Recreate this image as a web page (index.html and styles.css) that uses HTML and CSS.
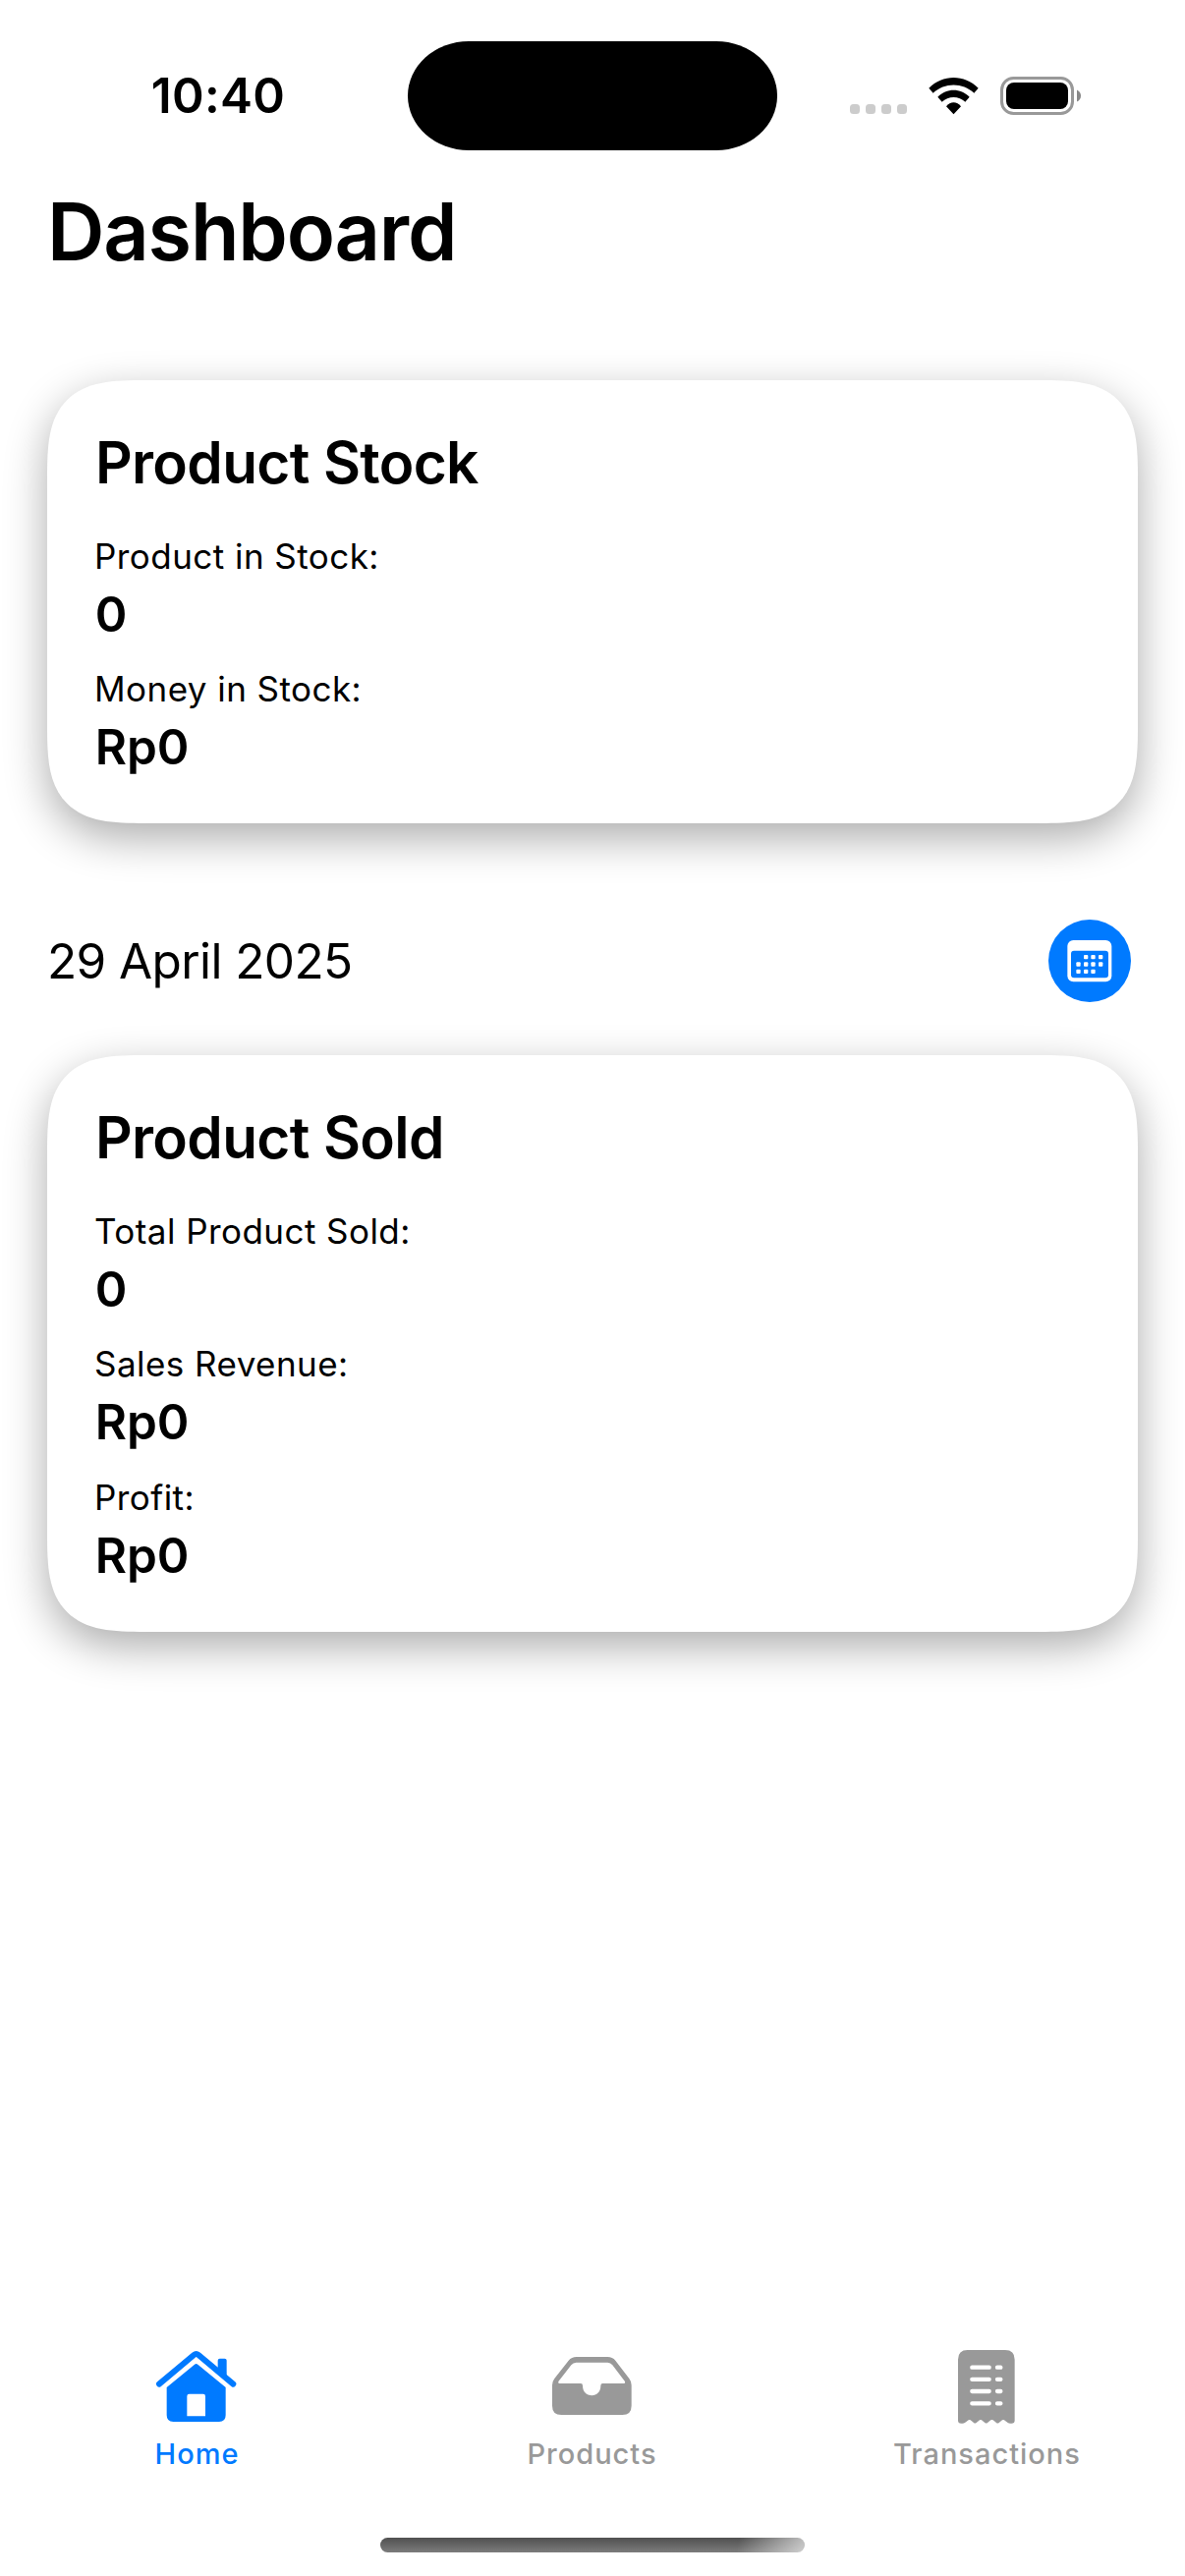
FILE: index.html
```html
<!DOCTYPE html>
<html lang="en">
<head>
<meta charset="utf-8">
<title>Dashboard</title>
<link rel="stylesheet" href="styles.css">
</head>
<body>
<div class="screen">
  <header class="status">
    <div class="status-time">10:40</div>
    <div class="island"></div>
    <div class="status-icons">
      <svg class="signal" viewBox="0 0 58 10"><rect width="10" height="10" rx="3.5"/><rect x="16" width="10" height="10" rx="3.5"/><rect x="32" width="10" height="10" rx="3.5"/><rect x="48" width="10" height="10" rx="3.5"/></svg>
      <svg class="wifi" viewBox="375 114 153 117"><path d="M376 149C418 106 485 106 527 149L514 164C479 131 424 131 389 164Z"/><path d="M403 176C430 148 473 148 500 176L487 191C468 172 435 172 416 191Z"/><path d="M429 205C441 189 462 189 474 205L451.5 229Z"/></svg>
      <svg class="battery" viewBox="0 0 83 39"><rect x="1.5" y="1.5" width="72" height="36" rx="12" fill="none" stroke="#999" stroke-width="3"/><rect x="6" y="6" width="63" height="27" rx="8"/><path d="M78 13.500Q82 15.500 82 19.500T78 25.500Z" fill="#888"/></svg>
    </div>
  </header>

  <main class="content">
    <h1 class="title">Dashboard</h1>

    <section class="card">
      <h2 class="card-title">Product Stock</h2>
      <dl class="stats">
        <div class="stat"><dt>Product in Stock:</dt><dd>0</dd></div>
        <div class="stat"><dt>Money in Stock:</dt><dd>Rp0</dd></div>
      </dl>
    </section>

    <div class="date-row">
      <span class="date">29 April 2025</span>
      <svg class="calendar" viewBox="81 108 252 252">
        <circle cx="207" cy="234" r="126" fill="#007aff"/>
        <rect x="139" y="171" width="135" height="127" rx="18" fill="#fff"/>
        <rect x="150" y="203" width="114" height="83" rx="9" fill="#007aff"/>
        <g fill="#fff">
          <rect x="189" y="216" width="13" height="13" rx="3"/><rect x="211" y="216" width="13" height="13" rx="3"/><rect x="234" y="216" width="13" height="13" rx="3"/>
          <rect x="166" y="238" width="13" height="13" rx="3"/><rect x="189" y="238" width="13" height="13" rx="3"/><rect x="211" y="238" width="13" height="13" rx="3"/><rect x="234" y="238" width="13" height="13" rx="3"/>
          <rect x="166" y="260" width="13" height="13" rx="3"/><rect x="189" y="260" width="13" height="13" rx="3"/><rect x="211" y="260" width="13" height="13" rx="3"/>
        </g>
      </svg>
    </div>

    <section class="card">
      <h2 class="card-title">Product Sold</h2>
      <dl class="stats">
        <div class="stat"><dt>Total Product Sold:</dt><dd>0</dd></div>
        <div class="stat"><dt>Sales Revenue:</dt><dd>Rp0</dd></div>
        <div class="stat"><dt>Profit:</dt><dd>Rp0</dd></div>
      </dl>
    </section>
  </main>

  <nav class="tabs">
    <a class="tab tab-active">
      <svg class="tab-icon" viewBox="78 72 270 252">
        <path d="M96 200L202 111Q209 105 216 111L322 200" fill="none" stroke="currentColor" stroke-width="18" stroke-linecap="round"/>
        <path d="M275 162V128Q275 122 281 122H296Q302 122 302 128V184Z"/>
        <path fill-rule="evenodd" d="M119 210L204 140Q209 136 214 140L299 210V295Q299 315 279 315H139Q119 315 119 295ZM181 298H237V237Q237 230 230 230H188Q181 230 181 237Z"/>
      </svg>
      <span>Home</span>
    </a>
    <a class="tab">
      <svg class="tab-icon" viewBox="144 72 270 252">
        <path fill-rule="evenodd" d="M156 203Q156 192 163 183L206 128Q215 117 230 117H325Q340 117 349 128L391 183Q398 192 398 203V266Q398 294 370 294H184Q156 294 156 266ZM177 198H243Q249 198 249 205C249 224 261 235 277 235C292 235 304 224 304 205Q304 198 310 198H376Q380 197 378 192L340 142Q334 134 325 134H229Q220 134 214 142L175 192Q173 197 177 198Z"/>
      </svg>
      <span>Products</span>
    </a>
    <a class="tab">
      <svg class="tab-icon" viewBox="210 72 270 252">
        <path d="M255 125Q255 96 284 96H399Q428 96 428 125V311Q428 320 418 320Q411 321 406 317L396 310Q393 308 390 310L380 318Q376 321 372 318L362 310Q358 308 355 310L345 318Q341 321 337 318L327 310Q324 308 321 310L311 318Q307 321 303 318L293 310Q290 308 287 310L277 317Q272 321 265 320Q255 320 255 311Z"/>
        <path d="M298 149H350M298 185.500H350M298 222H350M298 259H350M375 149H385M375 185.500H385M375 222H385M375 259H385" stroke="#fff" stroke-width="13" stroke-linecap="round"/>
      </svg>
      <span>Transactions</span>
    </a>
  </nav>
  <div class="home-indicator"></div>
</div>
</body>
</html>
```
FILE: styles.css
```css
* { box-sizing: border-box; margin: 0; padding: 0; }

body {
  background: #fff;
  color: #000;
  font-family: Inter, "Liberation Sans", sans-serif;
}

svg { display: block; fill: currentColor; }

.screen {
  display: flex;
  flex-direction: column;
  width: 1206px;
  height: 2622px;
  overflow: hidden;
}

.status {
  display: grid;
  grid-template-columns: 415px 376px 415px;
  align-items: center;
  height: 182px;
  padding-top: 12px;
}

.status-time {
  padding-left: 29px;
  text-align: center;
  font-size: 49.5px;
  line-height: 60px;
  font-weight: 600;
  letter-spacing: 0.3px;
}

.island {
  height: 111px;
  border-radius: 62px / 55.5px;
  background: #000;
}

.status-icons { display: flex; align-items: center; padding-left: 74px; }
.signal { width: 58px; height: 10px; margin: 27px 22px 0 0; color: #ccc; }
.wifi { width: 51px; height: 39px; margin-right: 22px; }
.battery { width: 83px; height: 39px; }

.content { flex: 1; padding: 6px 48px 0; }

.title {
  font-size: 81px;
  line-height: 96px;
  font-weight: 600;
  letter-spacing: -1.2px;
}

.card {
  padding: 48px;
  border-radius: 100px;
  corner-shape: superellipse(1.62);
  background: #fff;
  box-shadow: 0 15px 44px rgba(0, 0, 0, 0.33);
}

.title + .card { margin-top: 103px; }

.card-title {
  margin-bottom: 37.5px;
  padding-left: 1px;
  font-size: 58.5px;
  line-height: 72px;
  font-weight: 600;
  letter-spacing: -0.65px;
}

.stats { display: grid; gap: 25.7px; }

.stat dt {
  margin-bottom: 7px;
  font-size: 35px;
  line-height: 43px;
  letter-spacing: 0.45px;
}

.stat dd {
  padding-left: 0.7px;
  font-size: 49.5px;
  line-height: 60px;
  font-weight: 600;
}

.date-row {
  display: flex;
  align-items: center;
  justify-content: space-between;
  margin: 98px 7px 54px 0;
}

.date { font-size: 49.5px; line-height: 60px; letter-spacing: -0.6px; }
.calendar { width: 84px; height: 84px; }

.tabs {
  display: grid;
  grid-template-columns: repeat(3, 402px);
  height: 199px;
}

.tab {
  display: flex;
  flex-direction: column;
  align-items: center;
  gap: 11.5px;
  color: #999;
  font-size: 29px;
  line-height: 36px;
  font-weight: 500;
  letter-spacing: 1px;
}

.tab span { margin-right: 1px; }
.tab-active { color: #007aff; }
.tab-icon { width: 90px; height: 84px; }

.home-indicator {
  width: 432px;
  height: 15px;
  margin: 0 auto 24px;
  border-radius: 8px;
  background:
    linear-gradient(100deg, transparent 84%, rgba(255, 255, 255, 0.6) 99%),
    linear-gradient(#505050, #7c7c7c);
}
```
